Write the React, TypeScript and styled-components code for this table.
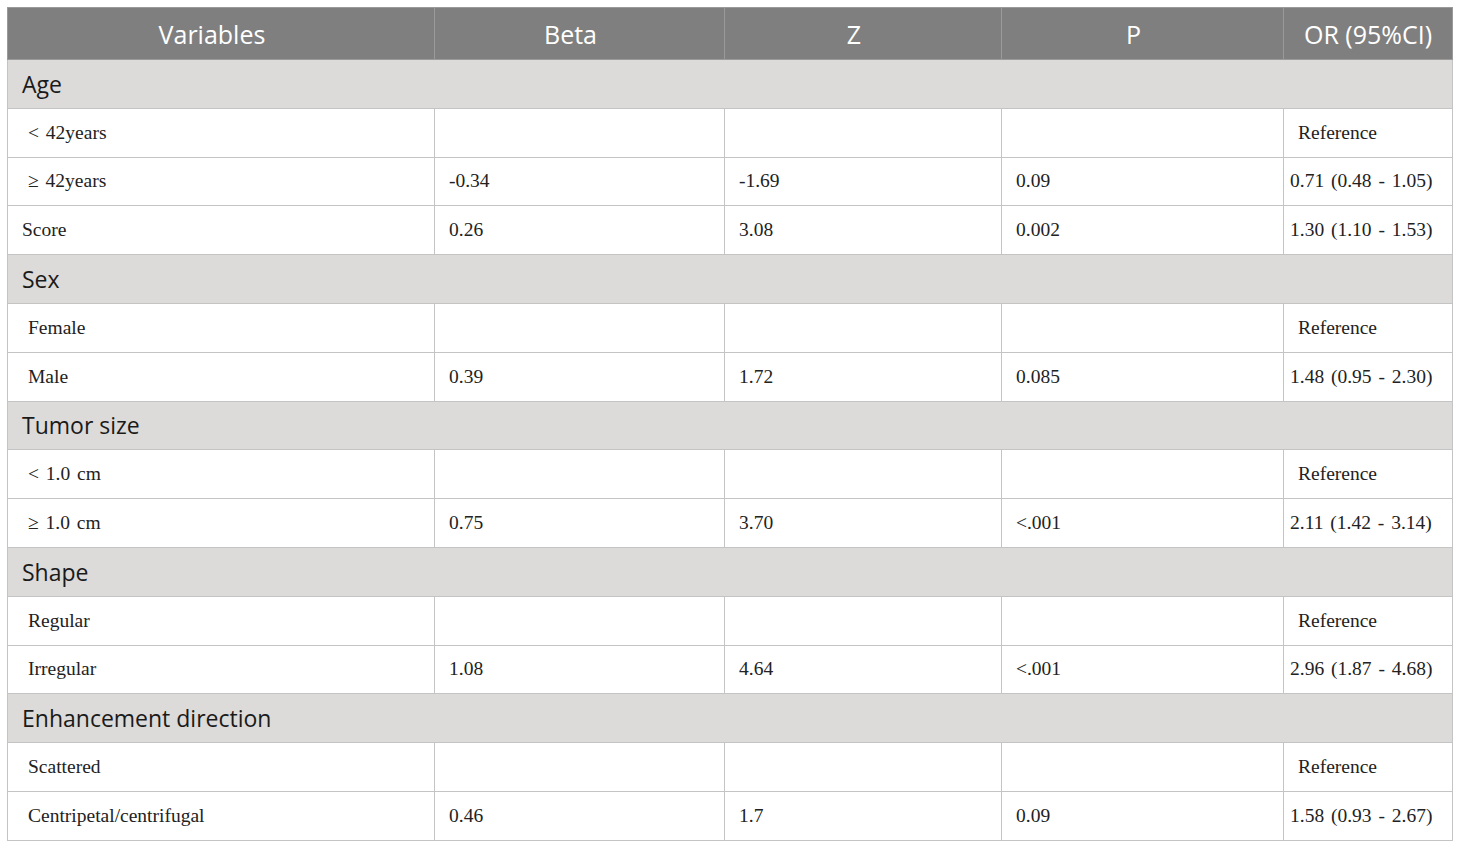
import React from "react";
import styled, { createGlobalStyle } from "styled-components";

const Global = createGlobalStyle`
  html, body { margin: 0; padding: 0; background: #ffffff; }
  body { padding: 7px; }
`;

const Table = styled.table`
  border-collapse: collapse;
  width: 1445px;
  table-layout: fixed;
  border: 1px solid #a9a9a9;
`;

const HeadCell = styled.th<{ $w: number; $last?: boolean }>`
  width: ${(p) => p.$w}px;
  height: 52px;
  padding: ${(p) => (p.$last ? "0" : "0 18px 0 0")};
  background: #7f7f7f;
  color: #ffffff;
  font-family: "Open Sans", "Noto Sans", sans-serif;
  font-weight: 400;
  font-size: 25px;
  text-align: center;
  white-space: nowrap;
  border: 1px solid #9a9a9a;
  box-sizing: border-box;
`;

const SectionCell = styled.td`
  height: 48.8px;
  padding: 0 14px;
  background: #dcdbd9;
  color: #1a1a1a;
  font-family: "Open Sans", "Noto Sans", sans-serif;
  font-size: 23px;
  border: 1px solid #c4c4c4;
  box-sizing: border-box;
`;

const Cell = styled.td<{ $pad: number }>`
  height: 48.8px;
  padding: 0 4px 0 ${(p) => p.$pad}px;
  background: #ffffff;
  color: #222222;
  font-family: "Liberation Serif", "Times New Roman", serif;
  font-size: 19.5px;
  word-spacing: 2px;
  white-space: nowrap;
  border: 1px solid #c4c4c4;
  box-sizing: border-box;
`;

type Row =
  | { kind: "section"; label: string }
  | { kind: "data"; label: string; indent: boolean; cells: string[] };

const rows: Row[] = [
  { kind: "section", label: "Age" },
  { kind: "data", label: "< 42years", indent: true, cells: ["", "", "", "Reference"] },
  { kind: "data", label: "≥ 42years", indent: true, cells: ["-0.34", "-1.69", "0.09", "0.71 (0.48 - 1.05)"] },
  { kind: "data", label: "Score", indent: false, cells: ["0.26", "3.08", "0.002", "1.30 (1.10 - 1.53)"] },
  { kind: "section", label: "Sex" },
  { kind: "data", label: "Female", indent: true, cells: ["", "", "", "Reference"] },
  { kind: "data", label: "Male", indent: true, cells: ["0.39", "1.72", "0.085", "1.48 (0.95 - 2.30)"] },
  { kind: "section", label: "Tumor size" },
  { kind: "data", label: "< 1.0 cm", indent: true, cells: ["", "", "", "Reference"] },
  { kind: "data", label: "≥ 1.0 cm", indent: true, cells: ["0.75", "3.70", "<.001", "2.11 (1.42 - 3.14)"] },
  { kind: "section", label: "Shape" },
  { kind: "data", label: "Regular", indent: true, cells: ["", "", "", "Reference"] },
  { kind: "data", label: "Irregular", indent: true, cells: ["1.08", "4.64", "<.001", "2.96 (1.87 - 4.68)"] },
  { kind: "section", label: "Enhancement direction" },
  { kind: "data", label: "Scattered", indent: true, cells: ["", "", "", "Reference"] },
  { kind: "data", label: "Centripetal/centrifugal", indent: true, cells: ["0.46", "1.7", "0.09", "1.58 (0.93 - 2.67)"] },
];

const headers: [string, number][] = [
  ["Variables", 427],
  ["Beta", 290],
  ["Z", 277],
  ["P", 282],
  ["OR (95%CI)", 169],
];

export default function App() {
  return (
    <>
      <Global />
      <Table>
        <thead>
          <tr>
            {headers.map(([h, w], i) => (
              <HeadCell key={h} $w={w} $last={i === headers.length - 1}>
                {h}
              </HeadCell>
            ))}
          </tr>
        </thead>
        <tbody>
          {rows.map((r, i) =>
            r.kind === "section" ? (
              <tr key={i}>
                <SectionCell colSpan={5}>{r.label}</SectionCell>
              </tr>
            ) : (
              <tr key={i}>
                <Cell $pad={r.indent ? 20 : 14}>{r.label}</Cell>
                {r.cells.map((c, j) => (
                  <Cell key={j} $pad={j === 3 && c !== "Reference" ? 6 : 14}>
                    {c}
                  </Cell>
                ))}
              </tr>
            )
          )}
        </tbody>
      </Table>
    </>
  );
}
